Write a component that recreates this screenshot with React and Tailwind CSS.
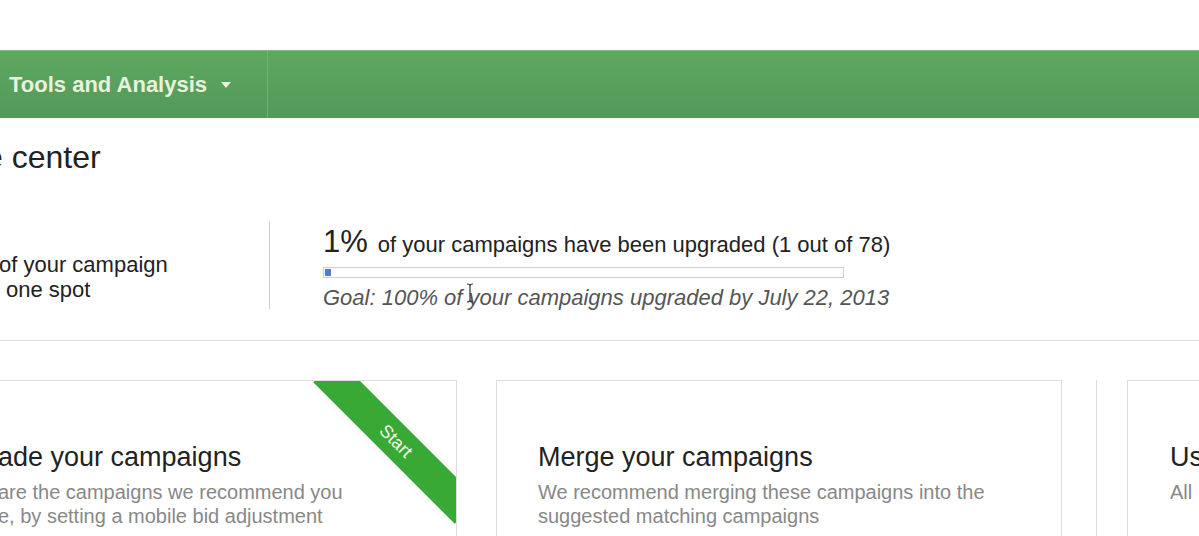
import React from 'react';

const font = { fontFamily: '"Liberation Sans", Arial, sans-serif' };

export default function App() {
    return (
        <div className="w-[1199px] h-[536px] overflow-hidden bg-white text-[#222]" style={font}>
            <div className="h-[50px]" />

            {/* green nav bar */}
            <div className="flex h-[68px] bg-gradient-to-b from-[#5da85f] to-[#54995a] border-t border-[#7dbb7e]">
                <div className="flex items-center w-[268px] pl-[9px] border-r border-[#72b373]">
                    <span className="text-[22px] font-bold text-[#e9f2df]">Tools and Analysis</span>
                    <svg className="ml-[14px]" width="10" height="6" viewBox="0 0 10 6">
                        <path d="M0 0 L10 0 L5 6 Z" fill="#e9f2df" />
                    </svg>
                </div>
            </div>

            {/* heading */}
            <h1 className="mt-[21px] -ml-[15px] text-[32px] leading-[37px] whitespace-nowrap">e center</h1>

            {/* progress summary */}
            <div className="flex mt-[45px] h-[88px]">
                <div className="w-[270px] border-r border-[#ccc] pt-[31px] text-[22px] leading-[25px]">
                    <p className="-ml-[1px]">of your campaign</p>
                    <p className="pl-[6px]">one spot</p>
                </div>
                <div className="relative pl-[53px] pt-[5px]">
                    <p className="leading-[32px] whitespace-nowrap">
                        <span className="text-[31px]">1%</span>
                        <span className="text-[22px] ml-[10px]">of your campaigns have been upgraded (1 out of 78)</span>
                    </p>
                    <div className="mt-[4px] w-[521px] h-[11px] border border-[#cfcfcf] bg-white p-px">
                        <div className="w-[6px] h-full bg-[#4a7fd8]" />
                    </div>
                    <p className="mt-[7px] text-[22px] leading-[26px] italic text-[#555] whitespace-nowrap">
                        Goal: 100% of your campaigns upgraded by July 22, 2013
                    </p>
                    {/* mouse cursor */}
                    <svg className="absolute left-[196px] top-[62px]" width="8" height="20" viewBox="0 0 8 20">
                        <path d="M1 1 Q4 1 4 3 Q4 1 7 1 M4 3 L4 17 M1 19 Q4 19 4 17 Q4 19 7 19" stroke="#333" strokeWidth="1.2" fill="none" />
                    </svg>
                </div>
            </div>

            <div className="mt-[31px] border-t border-[#ddd]" />

            {/* cards */}
            <div className="flex items-start mt-[39px]">
                <div className="relative -ml-px w-[458px] h-[200px] border border-[#ddd] overflow-hidden pt-[60px] shrink-0">
                    <h2 className="-ml-[2px] text-[27px] leading-[32px] whitespace-nowrap">ade your campaigns</h2>
                    <div className="mt-[7px] -ml-[2px] text-[20px] leading-[24px] text-[#888] whitespace-nowrap">
                        <p>are the campaigns we recommend you</p>
                        <p>e, by setting a mobile bid adjustment</p>
                    </div>
                    <div className="absolute top-[43px] -right-[40px] w-[200px] h-[34px] rotate-45 bg-[#38a935] flex items-center justify-center">
                        <span className="text-[18px] text-[#f2fbe9]">Start</span>
                    </div>
                </div>

                <div className="ml-[39px] w-[566px] h-[200px] border border-[#ddd] pt-[60px] pl-[41px] shrink-0">
                    <h2 className="text-[27px] leading-[32px] whitespace-nowrap">Merge your campaigns</h2>
                    <div className="mt-[7px] text-[20px] leading-[24px] text-[#888] whitespace-nowrap">
                        <p>We recommend merging these campaigns into the</p>
                        <p>suggested matching campaigns</p>
                    </div>
                </div>

                <div className="ml-[34px] w-px h-[200px] bg-[#ddd] shrink-0" />

                <div className="ml-[30px] w-[566px] h-[200px] border border-[#ddd] pt-[60px] pl-[42px] shrink-0">
                    <h2 className="text-[27px] leading-[32px] whitespace-nowrap">Use</h2>
                    <div className="mt-[7px] text-[20px] leading-[24px] text-[#888] whitespace-nowrap">
                        <p>All</p>
                    </div>
                </div>
            </div>
        </div>
    );
}
